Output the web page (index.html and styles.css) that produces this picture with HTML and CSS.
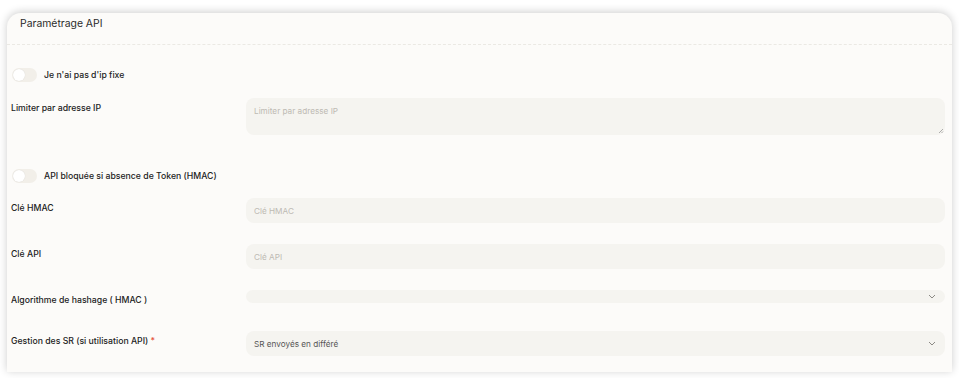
FILE: index.html
```html
<!DOCTYPE html>
<html>
<head>
    <title>Paramétrage API</title>
    <link rel="stylesheet" href="styles.css">
</head>
<body>
    <div class="card">
        <div class="card-header">Paramétrage API</div>

        <div class="card-body">
            <div class="toggle-row first">
                <span class="toggle"><span class="knob"></span></span>
                <span class="toggle-label">Je n'ai pas d'ip fixe</span>
            </div>

            <div class="field-row">
                <label class="field-label">Limiter par adresse IP</label>
                <div class="field">
                    <textarea class="input textarea" placeholder="Limiter par adresse IP"></textarea>
                    <svg class="grip" width="6" height="6" viewBox="0 0 6 6">
                        <path d="M5 1 L1 5 M5 3.5 L3.5 5" stroke="#999" stroke-width="0.8" fill="none"/>
                    </svg>
                </div>
            </div>

            <div class="toggle-row second">
                <span class="toggle"><span class="knob"></span></span>
                <span class="toggle-label">API bloquée si absence de Token (HMAC)</span>
            </div>

            <div class="field-row">
                <label class="field-label">Clé HMAC</label>
                <div class="field">
                    <input class="input" type="text" placeholder="Clé HMAC">
                </div>
            </div>

            <div class="field-row">
                <label class="field-label">Clé API</label>
                <div class="field">
                    <input class="input" type="text" placeholder="Clé API">
                </div>
            </div>

            <div class="field-row">
                <label class="field-label">Algorithme de hashage ( HMAC )</label>
                <div class="field">
                    <div class="select empty">
                        <span></span>
                        <svg class="chevron" width="8" height="5" viewBox="0 0 8 5">
                            <path d="M1 1 L4 4 L7 1" stroke="#8c8a85" stroke-width="1" fill="none"/>
                        </svg>
                    </div>
                </div>
            </div>

            <div class="field-row last">
                <label class="field-label">Gestion des SR (si utilisation API) <span class="req">*</span></label>
                <div class="field">
                    <div class="select">
                        <span>SR envoyés en différé</span>
                        <svg class="chevron" width="8" height="5" viewBox="0 0 8 5">
                            <path d="M1 1 L4 4 L7 1" stroke="#8c8a85" stroke-width="1" fill="none"/>
                        </svg>
                    </div>
                </div>
            </div>
        </div>
    </div>
</body>
</html>
```

FILE: styles.css
```css
body {
    margin: 0;
    background-color: #fff;
    font-family: Inter, "Noto Sans", sans-serif;
    color: #222;
    height: 378px;
    overflow: hidden;
}
.card {
    margin: 13px 7px 0 7px;
    background-color: #fcfbf9;
    border-radius: 14px 14px 0 0;
    box-shadow: 0 -1px 8px rgba(0, 0, 0, 0.2);
    height: 359px;
}
.card-header {
    height: 31px;
    padding-left: 13px;
    line-height: 22px;
    font-size: 10.4px;
    font-weight: 400;
    color: #2b2b2b;
    border-bottom: 1px dashed #ebe9e4;
}
.card-body {
    padding: 23px 7px 0 4px;
}
.toggle-row {
    display: flex;
    align-items: center;
    height: 14px;
}
.toggle-row.first {
    margin-bottom: 16px;
}
.toggle-row.second {
    margin-top: 34px;
    margin-bottom: 15px;
}
.toggle {
    width: 25px;
    height: 14px;
    margin-left: 1px;
    border-radius: 7px;
    background-color: #f2efe9;
    display: flex;
    align-items: center;
    padding-left: 1px;
    box-sizing: border-box;
}
.knob {
    width: 12px;
    height: 12px;
    border-radius: 50%;
    background-color: #fff;
    box-shadow: 0 0 1px rgba(0, 0, 0, 0.15);
}
.toggle-label {
    margin-left: 7px;
    font-size: 8.7px;
    font-weight: 500;
}
.field-row {
    display: flex;
    align-items: flex-start;
    min-height: 20px;
    margin-bottom: 21px;
}
.field-row.last {
    margin-bottom: 0;
}
.field-label {
    width: 235px;
    flex-shrink: 0;
    padding-top: 4px;
    line-height: 12px;
    font-size: 8.7px;
    font-weight: 500;
}
.req {
    color: #e5533d;
}
.field {
    flex: 1;
    position: relative;
}
.input {
    display: block;
    width: 100%;
    box-sizing: border-box;
    height: 25px;
    border: none;
    outline: none;
    border-radius: 8px;
    background-color: #f5f4f0;
    padding: 0 8px;
    font-family: Inter, "Noto Sans", sans-serif;
    font-size: 8.2px;
    color: #444;
}
.input::placeholder {
    color: #bdbab3;
}
.textarea {
    height: 37px;
    padding-top: 8px;
    resize: none;
}
.grip {
    position: absolute;
    right: 1px;
    bottom: 1px;
}
.select {
    display: flex;
    align-items: center;
    justify-content: space-between;
    height: 25px;
    border-radius: 8px;
    background-color: #f5f4f0;
    padding: 0 8px;
    font-size: 8.2px;
    color: #555;
}
.select.empty {
    height: 13px;
    border-radius: 7px;
}
.chevron {
    margin-right: 1px;
}
```
